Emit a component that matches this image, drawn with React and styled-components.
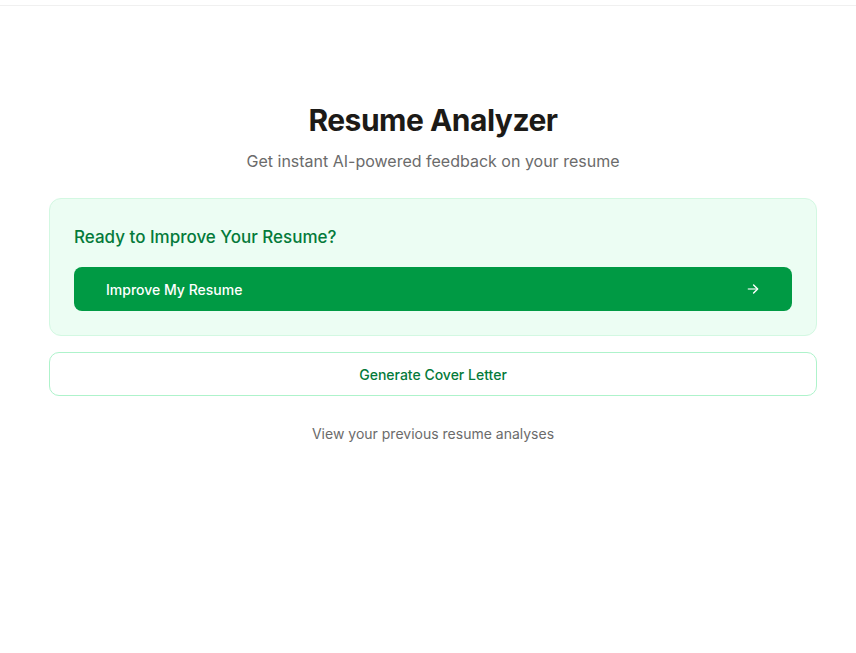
import React from 'react';
import styled, { createGlobalStyle } from 'styled-components';

const GlobalStyle = createGlobalStyle`
  html, body {
    margin: 0;
    padding: 0;
    background: #ffffff;
    font-family: Inter, "Noto Sans", "Liberation Sans", sans-serif;
    -webkit-font-smoothing: antialiased;
  }
`;

const TopBar = styled.div`
  height: 5px;
  border-bottom: 1px solid #f0f0f0;
`;

const Main = styled.main`
  padding: 96px 39px 0 49px;
`;

const Container = styled.div`
  max-width: 768px;
  margin: 0 auto;
  display: flex;
  flex-direction: column;
`;

const Title = styled.h1`
  margin: 0;
  text-align: center;
  font-size: 30px;
  line-height: 36px;
  font-weight: 700;
  color: #1c1a17;
  letter-spacing: -0.5px;
`;

const Subtitle = styled.p`
  margin: 11px 0 0;
  text-align: center;
  font-size: 16px;
  line-height: 24px;
  color: #6b6b6b;
`;

const Card = styled.section`
  margin-top: 25px;
  background: #ecfdf3;
  border: 1px solid #d3f8e2;
  border-radius: 12px;
  padding: 24px;
`;

const CardTitle = styled.h2`
  margin: 0;
  font-size: 17px;
  line-height: 28px;
  font-weight: 500;
  color: #047a3a;
`;

const PrimaryButton = styled.button`
  margin-top: 16px;
  width: 100%;
  height: 44px;
  display: flex;
  align-items: center;
  justify-content: space-between;
  padding: 0 32px;
  border: none;
  border-radius: 8px;
  background: #009a44;
  color: #ffffff;
  font-family: inherit;
  font-size: 14px;
  font-weight: 500;
  cursor: pointer;
`;

const SecondaryButton = styled.button`
  margin-top: 16px;
  width: 100%;
  height: 44px;
  border: 1px solid #aef3cb;
  border-radius: 10px;
  background: #ffffff;
  color: #047a3a;
  font-family: inherit;
  font-size: 14px;
  font-weight: 500;
  cursor: pointer;
`;

const HistoryLink = styled.a`
  margin-top: 28px;
  text-align: center;
  font-size: 14px;
  line-height: 20px;
  color: #6b6b6b;
  cursor: pointer;
`;

const Arrow = () => (
  <svg width="14" height="14" viewBox="0 0 24 24" fill="none" stroke="currentColor" strokeWidth="2.4" strokeLinecap="round" strokeLinejoin="round">
    <path d="M4 12h15" opacity="0.75" />
    <path d="M13 5l7 7-7 7" />
  </svg>
);

const App = () => (
  <>
    <GlobalStyle />
    <TopBar />
    <Main>
      <Container>
        <Title>Resume Analyzer</Title>
        <Subtitle>Get instant AI-powered feedback on your resume</Subtitle>

        <Card>
          <CardTitle>Ready to Improve Your Resume?</CardTitle>
          <PrimaryButton>
            <span>Improve My Resume</span>
            <Arrow />
          </PrimaryButton>
        </Card>

        <SecondaryButton>Generate Cover Letter</SecondaryButton>

        <HistoryLink>View your previous resume analyses</HistoryLink>
      </Container>
    </Main>
  </>
);

export default App;
